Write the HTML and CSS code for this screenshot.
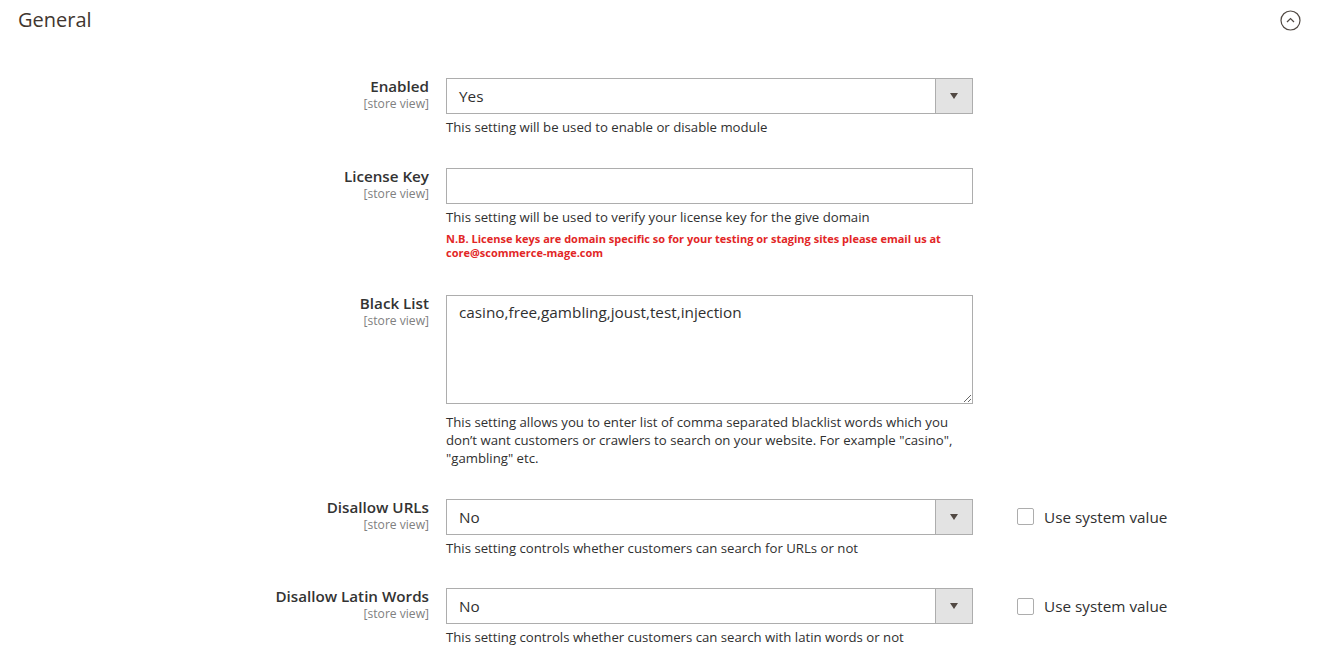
FILE: index.html
```html
<!DOCTYPE html>
<html lang="en">
<head>
<meta charset="utf-8">
<title>General</title>
<link rel="stylesheet" href="styles.css">
</head>
<body>
<div class="section">
  <div class="section-head">
    <h2 class="section-title">General</h2>
    <span class="collapse-icon">
      <svg width="21" height="21" viewBox="0 0 21 21"><circle cx="10.5" cy="10.5" r="9.5" fill="none" stroke="#514943" stroke-width="1.2"/><path d="M7 12 L10.5 8.6 L14 12" fill="none" stroke="#514943" stroke-width="1.3"/></svg>
    </span>
  </div>

  <div class="form">
    <div class="row">
      <div class="label"><span class="label-text">Enabled</span><span class="scope">[store view]</span></div>
      <div class="control">
        <div class="select"><span class="select-value">Yes</span><span class="select-btn"><span class="arrow"></span></span></div>
        <p class="note">This setting will be used to enable or disable module</p>
      </div>
      <div class="extra"></div>
    </div>

    <div class="row">
      <div class="label"><span class="label-text">License Key</span><span class="scope">[store view]</span></div>
      <div class="control">
        <input class="input" type="text" value="">
        <p class="note">This setting will be used to verify your license key for the give domain</p>
        <p class="warn">N.B. License keys are domain specific so for your testing or staging sites please email us at core@scommerce-mage.com</p>
      </div>
      <div class="extra"></div>
    </div>

    <div class="row">
      <div class="label"><span class="label-text">Black List</span><span class="scope">[store view]</span></div>
      <div class="control">
        <textarea class="textarea">casino,free,gambling,joust,test,injection</textarea>
        <p class="note">This setting allows you to enter list of comma separated blacklist words which you don’t want customers or crawlers to search on your website. For example "casino", "gambling" etc.</p>
      </div>
      <div class="extra"></div>
    </div>

    <div class="row">
      <div class="label"><span class="label-text">Disallow URLs</span><span class="scope">[store view]</span></div>
      <div class="control">
        <div class="select"><span class="select-value">No</span><span class="select-btn"><span class="arrow"></span></span></div>
        <p class="note">This setting controls whether customers can search for URLs or not</p>
      </div>
      <div class="extra"><label class="sys"><span class="checkbox"></span><span>Use system value</span></label></div>
    </div>

    <div class="row">
      <div class="label"><span class="label-text">Disallow Latin Words</span><span class="scope">[store view]</span></div>
      <div class="control">
        <div class="select"><span class="select-value">No</span><span class="select-btn"><span class="arrow"></span></span></div>
        <p class="note">This setting controls whether customers can search with latin words or not</p>
      </div>
      <div class="extra"><label class="sys"><span class="checkbox"></span><span>Use system value</span></label></div>
    </div>
  </div>
</div>
</body>
</html>
```

FILE: styles.css
```css
* { box-sizing: border-box; }
html, body { margin: 0; padding: 0; background: #fff; }
body {
  font-family: "Open Sans", "Liberation Sans", sans-serif;
  color: #303030;
  font-size: 15.3px;
}
.section { padding: 0 20px 0 18px; }
.section-head {
  display: flex;
  align-items: center;
  justify-content: space-between;
  height: 39px;
}
.section-title {
  margin: 0;
  font-size: 20px;
  font-weight: 400;
  color: #41362f;
  line-height: 28px;
  padding-top: 0;
}
.collapse-icon { display: flex; margin-right: 0; margin-top: 1px; }
.form { padding-top: 39px; }
.row {
  display: grid;
  grid-template-columns: 411px 527px auto;
  column-gap: 17px;
  margin-bottom: 31.5px;
}
.label {
  display: flex;
  flex-direction: column;
  align-items: flex-end;
  text-align: right;
}
.label-text {
  font-size: 15.2px;
  font-weight: 600;
  line-height: 20px;
  margin-top: -2px;
  color: #333;
}
.scope {
  font-size: 12.1px;
  line-height: 16px;
  color: #808080;
}
.control { display: flex; flex-direction: column; }
.select {
  display: flex;
  height: 36px;
  border: 1px solid #adadad;
  background: #fff;
}
.select-value {
  flex: 1;
  padding-left: 12px;
  line-height: 35px;
  font-size: 15.3px;
  color: #303030;
}
.select-btn {
  width: 37px;
  background: #e3e3e3;
  border-left: 1px solid #adadad;
  display: flex;
  align-items: center;
  justify-content: center;
}
.arrow {
  width: 0; height: 0;
  border-left: 4.5px solid transparent;
  border-right: 4.5px solid transparent;
  border-top: 6px solid #514943;
}
.input {
  display: block;
  width: 100%;
  height: 36px;
  border: 1px solid #adadad;
  font: inherit;
  padding: 0 12px;
}
.textarea {
  display: block;
  width: 100%;
  height: 109px;
  border: 1px solid #adadad;
  font-family: "Open Sans", "Liberation Sans", sans-serif;
  font-size: 15.3px;
  line-height: 18px;
  color: #303030;
  padding: 7px 12px;
  resize: vertical;
  margin: 0 0 5px;
}
.note {
  margin: 4px 0 0;
  font-size: 13.2px;
  line-height: 18px;
  color: #303030;
}
.warn {
  margin: 6px 0 4px;
  font-size: 11px;
  line-height: 14px;
  font-weight: 700;
  color: #e22626;
}
.extra { padding-left: 27px; }
.sys {
  display: flex;
  align-items: center;
  gap: 10px;
  height: 36px;
  font-size: 15.3px;
  color: #303030;
}
.checkbox {
  width: 17px; height: 17px;
  border: 1px solid #adadad;
  border-radius: 2px;
  background: #fff;
}
```
